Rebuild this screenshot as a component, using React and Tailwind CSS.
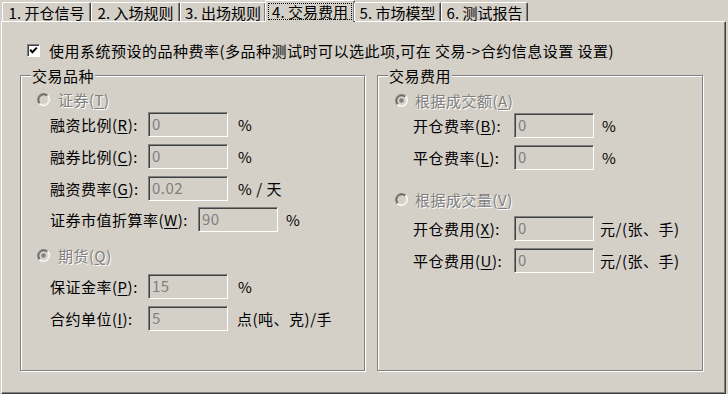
import React from 'react';

const grayText = 'text-[#808080] [text-shadow:1px_1px_0_#ffffff]';

const tabs = [
  { label: '1. 开仓信号', w: 'w-[89px]' },
  { label: '2. 入场规则', w: 'w-[89px]' },
  { label: '3. 出场规则', w: 'w-[86px]' },
  { label: '4. 交易费用', w: 'w-[90px]', active: true },
  { label: '5. 市场模型', w: 'w-[87px]' },
  { label: '6. 测试报告', w: 'w-[87px]' },
];

function Radio({ checked }) {
  return (
    <svg width="13" height="13" viewBox="0 0 13 13" className="shrink-0">
      <circle cx="6.5" cy="6.5" r="4.5" fill="#d4d0c8" />
      <path d="M2.26 10.74 A6 6 0 0 1 10.74 2.26" fill="none" stroke="#808080" strokeWidth="1.2" />
      <path d="M10.74 2.26 A6 6 0 0 1 2.26 10.74" fill="none" stroke="#ffffff" strokeWidth="1.2" />
      <path d="M2.97 10.03 A5 5 0 0 1 10.03 2.97" fill="none" stroke="#404040" strokeWidth="1" />
      <path d="M10.03 2.97 A5 5 0 0 1 2.97 10.03" fill="none" stroke="#e8e6e0" strokeWidth="1" />
      {checked && <circle cx="6.5" cy="6.5" r="2.2" fill="#808080" />}
    </svg>
  );
}

function Field({ value }) {
  return (
    <div className="h-[25px] w-[80px] shrink-0 border border-t-[#808080] border-l-[#808080] border-b-white border-r-white shadow-[inset_1px_1px_0_#404040] pl-[3px] pt-[2px] leading-[17px] text-[#808080]">
      {value}
    </div>
  );
}

function Row({ label, hot, value, unit, labelW, unitGap, mt = 'mt-[7px]' }) {
  const [pre, post] = label.split('|');
  return (
    <div className={`flex h-[25px] items-center ${mt}`}>
      <div className={`${labelW} shrink-0`}>
        {pre}(<u className="underline-offset-2">{hot}</u>){post}
      </div>
      <Field value={value} />
      {unit && <div className={unitGap}>{unit}</div>}
    </div>
  );
}

function RadioRow({ text, hot, checked, pl, gap, mt }) {
  return (
    <div className={`flex h-[16px] items-center ${pl} ${gap} ${mt}`}>
      <Radio checked={checked} />
      <span className={grayText}>
        {text}(<u className="underline-offset-2">{hot}</u>)
      </span>
    </div>
  );
}

function Group({ title, w, children }) {
  return (
    <div className={`relative h-[296px] ${w} shrink-0 border border-[#808080] shadow-[inset_1px_1px_0_#ffffff,1px_1px_0_#ffffff]`}>
      <div className="absolute -top-[9px] left-[10px] bg-[#d4d0c8] px-[1px] leading-[17px]">{title}</div>
      <div className="flex flex-col">{children}</div>
    </div>
  );
}

export default function App() {
  return (
    <div className="h-[394px] w-[728px] overflow-hidden bg-[#d4d0c8] font-['Noto_Sans_CJK_SC',sans-serif] text-[15px] leading-[17px] tracking-[0.5px] text-black">
      <div className="relative z-10 flex h-[21px] items-end pl-[2px] tracking-normal">
        {tabs.map((t) =>
          t.active ? (
            <div
              key={t.label}
              className={`${t.w} -mx-[1px] -mb-[1px] flex h-[22px] items-center justify-center rounded-t-[2px] border-l border-t border-r border-l-white border-t-white border-r-[#404040] bg-[#d4d0c8] shadow-[inset_-1px_0_0_#808080] px-[2px]`}
            >
              <span className="flex h-[17px] w-full items-center justify-center whitespace-pre border border-dotted border-black">{t.label}</span>
            </div>
          ) : (
            <div
              key={t.label}
              className={`${t.w} flex h-[19px] items-center justify-center whitespace-pre rounded-t-[2px] border-l border-t border-r border-l-white border-t-white border-r-[#404040] shadow-[inset_-1px_0_0_#808080]`}
            >
              {t.label}
            </div>
          )
        )}
      </div>

      <div className="ml-[1px] h-[373px] w-[725px] border border-white border-r-[#404040] border-b-[#404040] shadow-[inset_-1px_-1px_0_#808080]">
        <div className="ml-[25px] mt-[21px] flex h-[14px] items-center gap-[9px]">
          <div className="flex h-[13px] w-[13px] shrink-0 items-center justify-center border border-t-[#808080] border-l-[#808080] border-b-white border-r-white bg-white shadow-[inset_1px_1px_0_#404040]">
            <svg width="9" height="9" viewBox="0 0 9 9">
              <path d="M1.2 3.8 L3.4 6.2 L7.8 1.6" fill="none" stroke="#000" strokeWidth="2" />
            </svg>
          </div>
          <span>使用系统预设的品种费率(多品种测试时可以选此项,可在 交易-&gt;合约信息设置 设置)</span>
        </div>

        <div className="ml-[18px] mt-[18px] flex gap-[12px]">
          <Group title="交易品种" w="w-[345px]">
            <RadioRow text="证券" hot="T" pl="pl-[16px]" gap="gap-[8px]" mt="mt-[15px]" />
            <div className="flex flex-col pl-[29px]">
              <Row label="融资比例|:" hot="R" value="0" unit="%" labelW="w-[98px]" unitGap="ml-[10px]" mt="mt-[5px]" />
              <Row label="融券比例|:" hot="C" value="0" unit="%" labelW="w-[98px]" unitGap="ml-[10px]" />
              <Row label="融资费率|:" hot="G" value="0.02" unit="% / 天" labelW="w-[98px]" unitGap="ml-[10px]" />
              <Row label="证券市值折算率|:" hot="W" value="90" unit="%" labelW="w-[148px]" unitGap="ml-[8px]" mt="mt-[6px]" />
            </div>
            <RadioRow text="期货" hot="Q" checked pl="pl-[16px]" gap="gap-[8px]" mt="mt-[15px]" />
            <div className="flex flex-col pl-[29px]">
              <Row label="保证金率|:" hot="P" value="15" unit="%" labelW="w-[98px]" unitGap="ml-[10px]" mt="mt-[11px]" />
              <Row label="合约单位|:" hot="I" value="5" unit="点(吨、克)/手" labelW="w-[98px]" unitGap="ml-[9px]" />
            </div>
          </Group>

          <Group title="交易费用" w="w-[326px]">
            <RadioRow text="根据成交额" hot="A" checked pl="pl-[17px]" gap="gap-[7px]" mt="mt-[16px]" />
            <div className="flex flex-col pl-[35px]">
              <Row label="开仓费率|:" hot="B" value="0" unit="%" labelW="w-[101px]" unitGap="ml-[8px]" mt="mt-[5px]" />
              <Row label="平仓费率|:" hot="L" value="0" unit="%" labelW="w-[101px]" unitGap="ml-[8px]" />
            </div>
            <RadioRow text="根据成交量" hot="V" pl="pl-[17px]" gap="gap-[7px]" mt="mt-[21px]" />
            <div className="flex flex-col pl-[35px]">
              <Row label="开仓费用|:" hot="X" value="0" unit="元/(张、手)" labelW="w-[101px]" unitGap="ml-[6px]" mt="mt-[9px]" />
              <Row label="平仓费用|:" hot="U" value="0" unit="元/(张、手)" labelW="w-[101px]" unitGap="ml-[6px]" />
            </div>
          </Group>
        </div>
      </div>
    </div>
  );
}
